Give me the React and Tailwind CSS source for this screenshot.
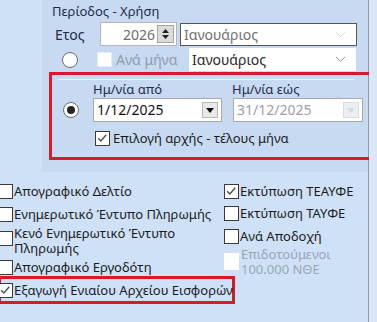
import React from "react";

const font = { fontFamily: '"Noto Sans", "DejaVu Sans", sans-serif' };

function Box({ checked, disabled, className = "" }) {
  return (
    <div
      className={`relative w-[15px] h-[15px] shrink-0 bg-white ${
        disabled ? "border border-[#e4ebf5]" : "border border-[#3a3a3a]"
      } ${className}`}
    >
      {checked && (
        <svg viewBox="0 0 15 15" className="absolute inset-0 w-[13px] h-[13px]">
          <path d="M2.5 7.2 L5.6 10.4 L11.8 3.2" fill="none" stroke="#4a4a4a" strokeWidth="1.5" />
        </svg>
      )}
    </div>
  );
}

function Radio({ checked }) {
  return (
    <div className="w-[16px] h-[16px] rounded-full bg-white border border-[#6b6b6b] flex items-center justify-center shrink-0">
      {checked && <div className="w-[8px] h-[8px] rounded-full bg-[#262626]" />}
    </div>
  );
}

function Chevron({ color }) {
  return (
    <svg width="11" height="7" viewBox="0 0 11 7">
      <path d="M1 1 L5.5 5.5 L10 1" fill="none" stroke={color} strokeWidth="1" />
    </svg>
  );
}

function DateInput({ value, disabled, className = "" }) {
  return (
    <div
      className={`h-[24px] bg-white border border-[#a9a9a9] flex items-center pl-[3px] pr-[3px] ${className}`}
    >
      <span className={`flex-1 text-[14px] leading-none ${disabled ? "text-[#9aa0a8]" : "text-[#111]"}`}>{value}</span>
      <div
        className={`w-[16px] h-[16px] flex items-center justify-center border ${
          disabled ? "bg-[#eceff3] border-[#d8dde3]" : "bg-[#e9e9e9] border-[#b8b8b8]"
        }`}
      >
        <svg width="8" height="5" viewBox="0 0 8 5">
          <path d="M0 0 L8 0 L4 5 Z" fill={disabled ? "#d5d9de" : "#111"} />
        </svg>
      </div>
    </div>
  );
}

function Check({ label, checked, className = "" }) {
  return (
    <div className={`flex items-center h-[16px] ${className}`}>
      <Box checked={checked} />
      <span className="ml-[1px] text-[13px] leading-[16px] text-[#1b1b1b] whitespace-nowrap">{label}</span>
    </div>
  );
}

export default function App() {
  return (
    <div className="w-[377px] h-[322px] overflow-hidden flex bg-[#cfe1f6]" style={font}>
      <div className="w-[369px] shrink-0 border-r border-[#8d9aac] flex flex-col">
        {/* period group */}
        <div className="ml-[42px] w-[326px] h-[172px] bg-[#c7daf2] flex flex-col">
          <div className="ml-[10px] mt-[3px] h-[16px] text-[13px] leading-[16px] text-[#1f2b47]">
            Περίοδος - Χρήση
          </div>

          <div className="mt-[3px] h-[24px] flex items-center">
            <span className="ml-[13px] w-[45px] text-[14px] text-[#1f2b47]">Ετος</span>
            <div className="w-[77px] h-[24px] bg-white border border-[#b5b5b5] flex items-center justify-end pr-[2px]">
              <span className="text-[14px] text-[#6d6d6d] mr-[2px]">2026</span>
              <div className="w-[17px] h-[18px] bg-[#dcdcdc] border border-[#a5a5a5] flex flex-col items-center justify-center gap-[2px]">
                <svg width="7" height="4" viewBox="0 0 7 4"><path d="M0 4 L3.5 0 L7 4 Z" fill="#222" /></svg>
                <svg width="7" height="4" viewBox="0 0 7 4"><path d="M0 0 L7 0 L3.5 4 Z" fill="#222" /></svg>
              </div>
            </div>
            <div className="ml-[3px] w-[177px] h-[23px] bg-white border border-[#555] flex items-center pl-[3px] pr-[10px]">
              <span className="flex-1 text-[14px] text-[#707070]">Ιανουάριος</span>
              <Chevron color="#dcdcdc" />
            </div>
          </div>

          <div className="mt-[2px] h-[23px] flex items-center">
            <div className="ml-[20px]">
              <Radio />
            </div>
            <Box disabled className="ml-[19px]" />
            <span className="ml-[4px] w-[73px] text-[14px] text-[#8e9ab0]">Ανά μήνα</span>
            <div className="w-[167px] h-[23px] bg-white flex items-center pl-[3px] pr-[10px]">
              <span className="flex-1 text-[14px] text-[#2a2a2a]">Ιανουάριος</span>
              <Chevron color="#9a9a9a" />
            </div>
          </div>

          {/* red highlighted date range */}
          <div className="mt-[1px] ml-[7px] w-[323px] h-[88px] border-[3px] border-[#d61a2c] flex flex-col">
            <div className="ml-[6px] mt-[4px] w-[296px] h-[1px] bg-[#eef4fb]" />
            <div className="mt-[2px] h-[15px] flex text-[13px] leading-[15px] text-[#1f2b47]">
              <span className="ml-[41px] w-[139px]">Ημ/νία από</span>
              <span>Ημ/νία εώς</span>
            </div>
            <div className="mt-[1px] h-[24px] flex items-center">
              <div className="ml-[11px]">
                <Radio checked />
              </div>
              <DateInput value="1/12/2025" className="ml-[14px] w-[129px]" />
              <DateInput value="31/12/2025" disabled className="ml-[11px] w-[130px]" />
            </div>
            <div className="mt-[8px] flex items-center h-[16px]">
              <Box checked className="ml-[43px]" />
              <span className="ml-[3px] text-[13px] leading-[16px] text-[#1b1b1b]">Επιλογή αρχής - τέλους μήνα</span>
            </div>
          </div>
        </div>

        {/* options */}
        <div className="mt-[11px] flex">
          <div className="-ml-[2px] w-[226px] flex flex-col">
            <Check label="Απογραφικό Δελτίο" />
            <Check label="Ενημερωτικό Έντυπο Πληρωμής" className="mt-[7px]" />
            <div className="mt-[2px] flex items-center h-[32px]">
              <Box className="-mt-[4px]" />
              <div className="ml-[1px] flex flex-col text-[13px] leading-[16px] text-[#1b1b1b]">
                <span className="h-[15px]">Κενό Ενημερωτικό Έντυπο</span>
                <span className="h-[15px]">Πληρωμής</span>
              </div>
            </div>
            <Check label="Απογραφικό Εργοδότη" className="mt-[3px]" />
            <div className="mt-[1px] w-[237px] h-[28px] border-[3px] border-[#d61a2c] flex items-center">
              <Box checked className="-ml-[3px]" />
              <span className="ml-[1px] text-[13px] leading-[16px] text-[#1b1b1b] whitespace-nowrap">
                Εξαγωγή Ενιαίου Αρχείου Εισφορών
              </span>
            </div>
          </div>
          <div className="flex flex-col">
            <Check label="Εκτύπωση ΤΕΑΥΦΕ" checked />
            <Check label="Εκτύπωση ΤΑΥΦΕ" className="mt-[6px]" />
            <Check label="Ανά Αποδοχή" className="mt-[7px]" />
            <div className="mt-[2px] flex items-center h-[30px]">
              <div className="w-[15px] h-[17px] bg-white shrink-0" />
              <div className="ml-[2px] flex flex-col text-[13px] leading-[16px] text-[#9aa5b6]">
                <span className="h-[15px]">Επιδοτούμενοι</span>
                <span className="h-[15px]">100.000 ΝΘΕ</span>
              </div>
            </div>
          </div>
        </div>
      </div>
      <div className="flex-1 bg-[#dbe7f6]" />
    </div>
  );
}
